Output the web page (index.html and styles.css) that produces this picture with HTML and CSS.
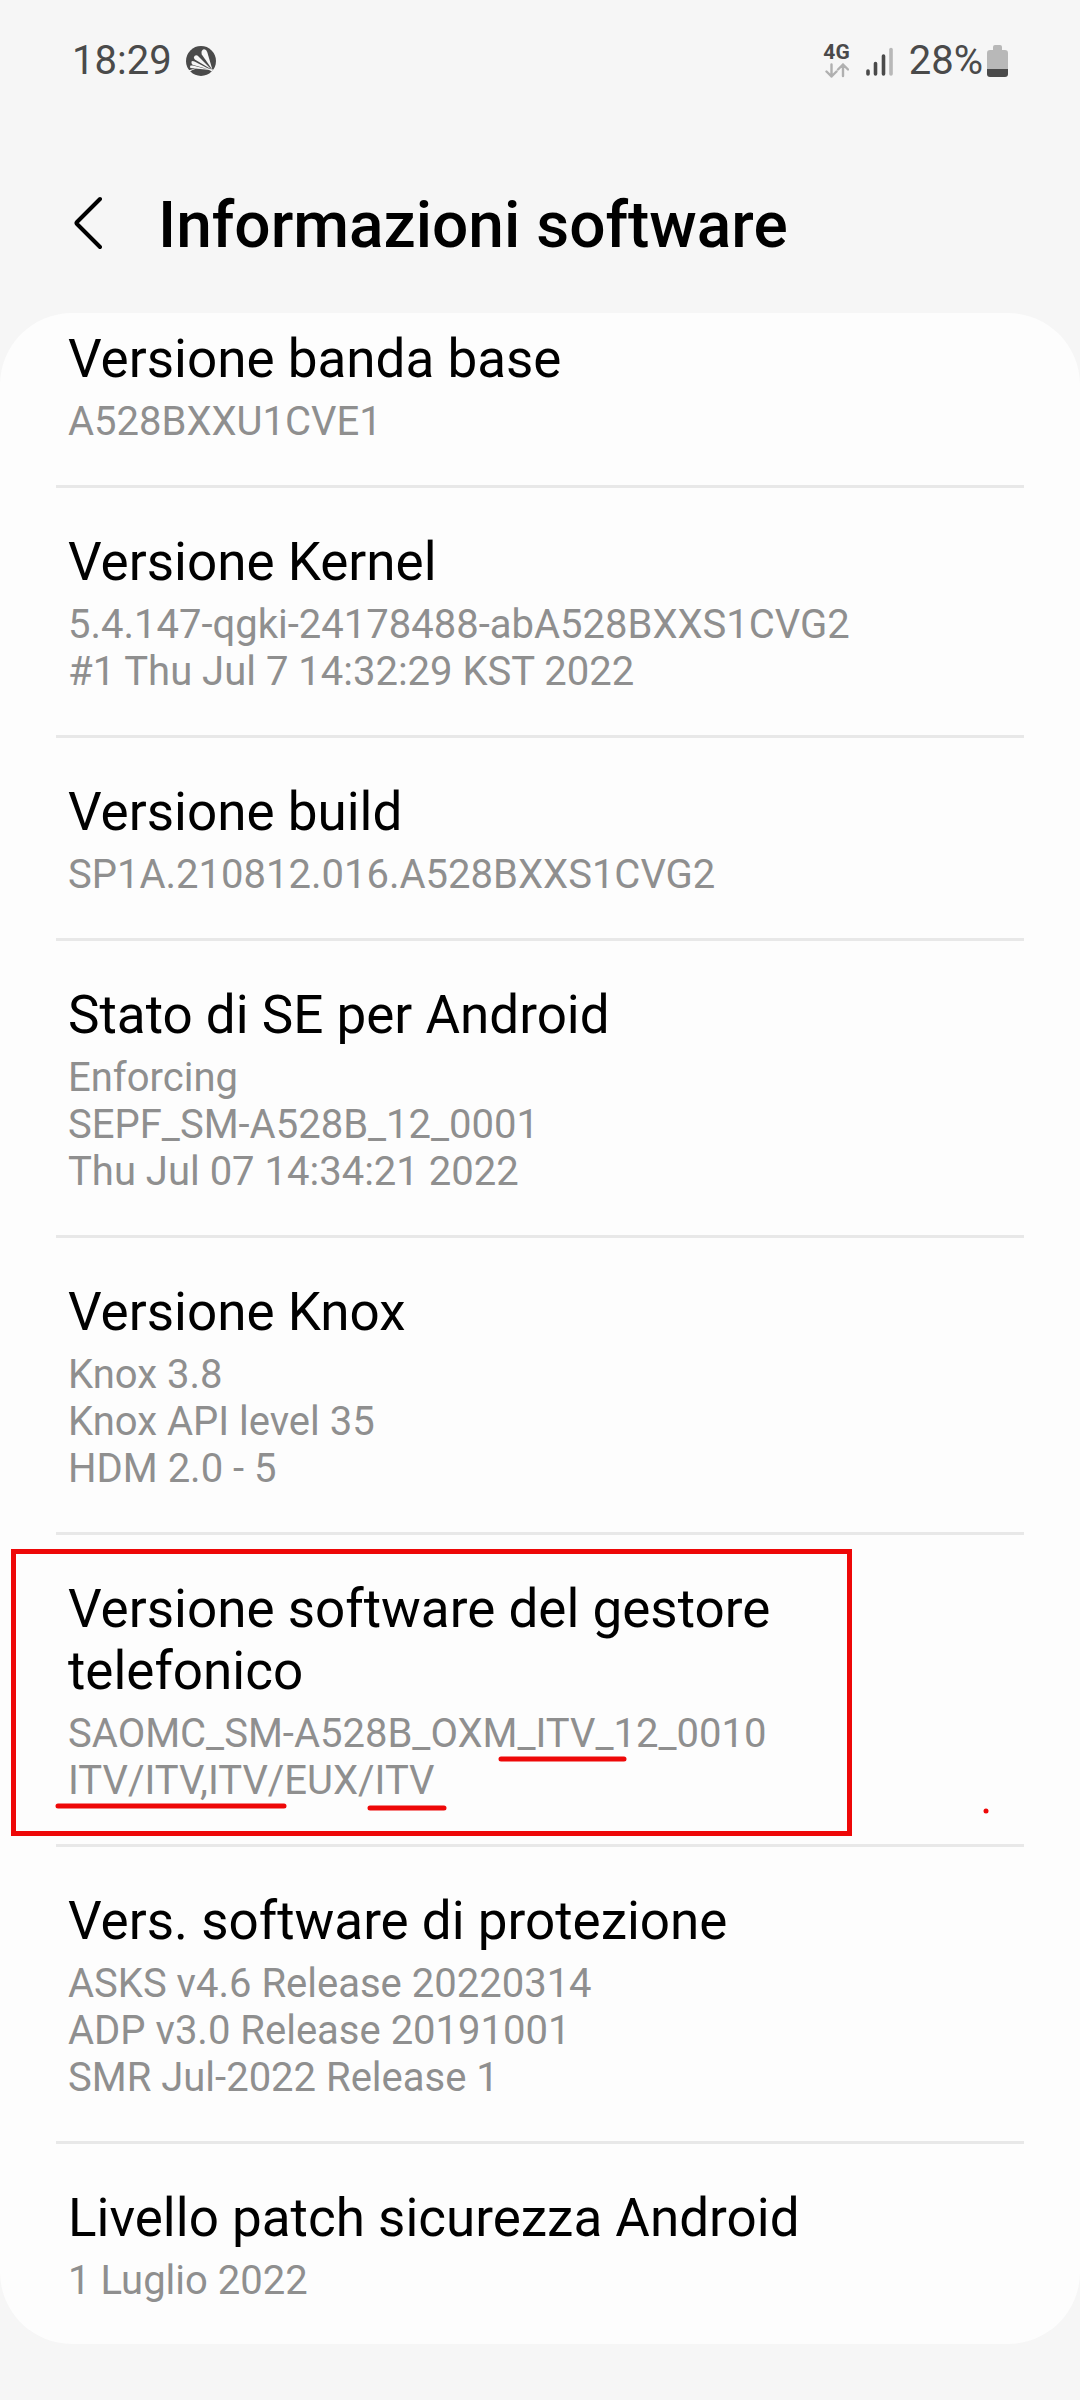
FILE: index.html
```html
<!DOCTYPE html>
<html lang="it">
<head>
<meta charset="utf-8">
<meta name="viewport" content="width=device-width, initial-scale=1">
<title>Informazioni software</title>
<link rel="stylesheet" href="styles.css">
</head>
<body>
<div class="status-bar">
  <div class="status-group status-left">
    <span>18:29</span>
    <svg width="30" height="30" viewBox="0 0 30 30" aria-hidden="true">
      <circle cx="15" cy="15" r="15" fill="#4a4a4a"/>
      <g fill="#f6f6f6">
        <path d="M26.500 24 15.800 8.500Q14.800 5 17 3.500Q20 2.500 21.200 6Z"/>
        <path d="M25.500 23.500 8.800 13.500Q7 11.500 8.500 10Q10.500 8.500 12.500 10.500Z"/>
        <path d="M25 24 6.500 18.800Q5 17.500 5.500 15.500Q6.500 14.500 8.500 15.500Z"/>
        <path d="M24 24 4.500 22Q3.500 21 4.500 19.500L7 19.500Z"/>
        <path d="M2 24.500Q13 20 27 23.500L26 25.500Q14 18.500 4 25.500Z"/>
      </g>
    </svg>
  </div>
  <div class="status-group status-right">
    <div class="network">
      <span>4G</span>
      <svg width="24" height="15" viewBox="0 0 24 15" fill="none" stroke="#b0b0b0" stroke-width="2.400" stroke-linecap="round" stroke-linejoin="round" aria-hidden="true">
        <path d="M6.500 1.500V13.500M1.500 8.500 6.500 13.500 11.500 8.500M18 13V1.500M13 6.500 18 1.500 23 6.500"/>
      </svg>
    </div>
    <svg class="signal" width="28" height="32" viewBox="0 0 28 32" stroke-width="3.600" stroke-linecap="round" aria-hidden="true">
      <path d="M2 26V29M9.500 18.500V29M17.500 11V29" stroke="#4a4a4a"/>
      <path d="M25 4.500V29" stroke="#b8b8b8"/>
    </svg>
    <span>28%</span>
    <svg class="battery" width="21" height="32" viewBox="0 0 21 32" aria-hidden="true">
      <path d="M6 5V2Q6 0 8 0H13Q15 0 15 2V5H18Q21 5 21 8V24H0V8Q0 5 3 5Z" fill="#b8b8b8"/>
      <path d="M0 24H21V29Q21 32 18 32H3Q0 32 0 29Z" fill="#4a4a4a"/>
    </svg>
  </div>
</div>

<header class="app-bar">
  <button class="back" type="button" aria-label="Indietro">
    <svg width="30" height="54" viewBox="0 0 30 54" fill="none" stroke="#000" stroke-width="4" stroke-linecap="round" stroke-linejoin="round" aria-hidden="true">
      <path d="M28 3 5 26Q4 27 5 28L28 51"/>
    </svg>
  </button>
  <h1>Informazioni software</h1>
</header>

<main class="card">
  <ul class="list">
    <li class="item"><div class="entry">
      <h2>Versione banda base</h2>
      <p>A528BXXU1CVE1</p>
    </div></li>
    <li class="item"><div class="entry">
      <h2>Versione Kernel</h2>
      <p>5.4.147-qgki-24178488-abA528BXXS1CVG2<br>#1 Thu Jul 7 14:32:29 KST 2022</p>
    </div></li>
    <li class="item"><div class="entry">
      <h2>Versione build</h2>
      <p>SP1A.210812.016.A528BXXS1CVG2</p>
    </div></li>
    <li class="item"><div class="entry">
      <h2>Stato di SE per Android</h2>
      <p>Enforcing<br>SEPF_SM-A528B_12_0001<br>Thu Jul 07 14:34:21 2022</p>
    </div></li>
    <li class="item"><div class="entry">
      <h2>Versione Knox</h2>
      <p>Knox 3.8<br>Knox API level 35<br>HDM 2.0 - 5</p>
    </div></li>
    <li class="item"><div class="entry">
      <h2>Versione software del gestore telefonico</h2>
      <p>SAOMC_SM-A528B_OXM_ITV_12_0010<br>ITV/ITV,ITV/EUX/ITV</p>
    </div>
      <svg class="marks" width="1080" height="312" viewBox="0 0 1080 312" fill="none" stroke="#ee0808" stroke-width="5" aria-hidden="true">
        <path d="M13.500 16.500H849.500V298.500H13.500Z"/>
        <path d="M501 224H624M58 271H284M370 273H444" stroke-linecap="round"/>
        <circle cx="986" cy="276" r="2.500" fill="#ee0808" stroke="none"/>
      </svg>
    </li>
    <li class="item"><div class="entry">
      <h2>Vers. software di protezione</h2>
      <p>ASKS v4.6 Release 20220314<br>ADP v3.0 Release 20191001<br>SMR Jul-2022 Release 1</p>
    </div></li>
    <li class="item"><div class="entry">
      <h2>Livello patch sicurezza Android</h2>
      <p>1 Luglio 2022</p>
    </div></li>
  </ul>
</main>
</body>
</html>
```
FILE: styles.css
```css
* {
  box-sizing: border-box;
}

body {
  margin: 0;
  background: #f6f6f6;
  color: #000;
  font-family: Roboto, "Liberation Sans", sans-serif;
}

h1, h2, p, ul {
  margin: 0;
  padding: 0;
}

.status-bar {
  display: flex;
  justify-content: space-between;
  align-items: center;
  height: 121px;
  padding: 0 72px;
  color: #4a4a4a;
  font-size: 40px;
  line-height: 48px;
}

.status-group {
  display: flex;
  align-items: center;
}

.status-left {
  gap: 14px;
}

.network {
  display: flex;
  flex-direction: column;
  align-items: center;
  gap: 2px;
  margin-right: 16px;
  font-size: 21px;
  font-weight: 700;
  line-height: 18px;
}

.signal {
  margin-right: 15px;
}

.battery {
  margin-left: 4px;
}

.app-bar {
  display: flex;
  align-items: center;
  height: 192px;
  padding: 12px 72px 0;
}

.back {
  display: flex;
  padding: 0;
  border: 0;
  background: none;
}

.app-bar h1 {
  padding-top: 6px;
  margin-left: 56px;
  font-size: 64px;
  font-weight: 500;
  line-height: 76px;
}

.card {
  overflow: hidden;
  margin-bottom: 56px;
  border-radius: 72px;
  background: #fdfdfd;
}

.list {
  list-style: none;
}

.item {
  position: relative;
  padding: 0 56px;
}

.entry {
  padding: 43px 36px 40px 12px;
  border-bottom: 3px solid #e8e8e8;
}

.item:first-child .entry {
  padding-top: 15px;
}

.item:last-child .entry {
  border-bottom: 0;
}

.item h2 {
  margin-bottom: 8px;
  font-size: 53px;
  font-weight: 400;
  line-height: 62px;
}

.item p {
  color: #8f8f8f;
  font-size: 40px;
  line-height: 47px;
}

.marks {
  position: absolute;
  top: 0;
  left: 0;
}
```
